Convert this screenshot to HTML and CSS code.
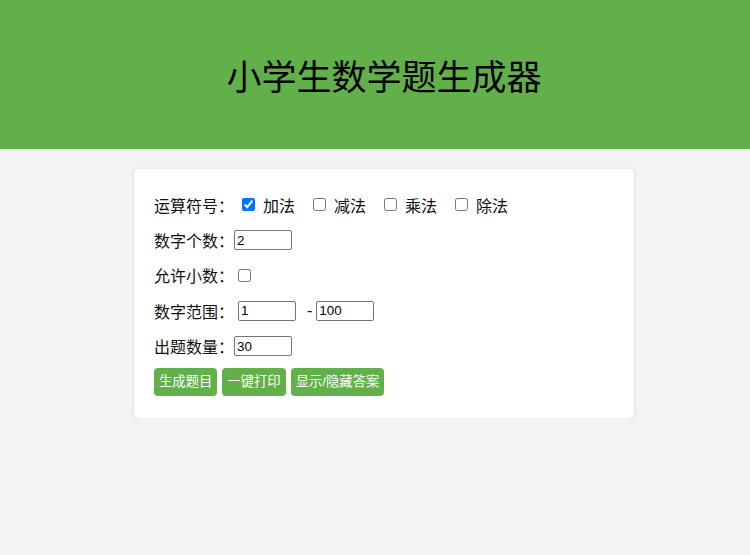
FILE: index.html
```html
<!DOCTYPE html>
<html lang="zh-CN">
<head>
<meta charset="utf-8">
<title>小学生数学题生成器</title>
<link rel="stylesheet" href="styles.css">
</head>
<body>
<header class="header">
  <h1 class="title">小学生数学题生成器</h1>
</header>
<main class="card">
  <div class="row">
    <span class="label label-gap">运算符号：</span>
    <label class="opt"><input type="checkbox" checked>加法</label>
    <label class="opt"><input type="checkbox">减法</label>
    <label class="opt"><input type="checkbox">乘法</label>
    <label class="opt"><input type="checkbox">除法</label>
  </div>
  <div class="row">
    <span class="label">数字个数：</span>
    <input class="num" type="text" value="2">
  </div>
  <div class="row">
    <span class="label">允许小数：</span>
    <input class="check" type="checkbox">
  </div>
  <div class="row">
    <span class="label label-gap">数字范围：</span>
    <input class="num" type="text" value="1">
    <span class="dash">-</span>
    <input class="num" type="text" value="100">
  </div>
  <div class="row">
    <span class="label">出题数量：</span>
    <input class="num" type="text" value="30">
  </div>
  <div class="actions">
    <button class="btn">生成题目</button>
    <button class="btn">一键打印</button>
    <button class="btn">显示/隐藏答案</button>
  </div>
</main>
</body>
</html>
```
FILE: styles.css
```css
html, body {
  margin: 0;
  padding: 0;
}
body {
  background: #f3f3f3;
  font-family: "Noto Sans CJK SC", "Noto Sans", sans-serif;
  color: #111;
}
.header {
  background: #62b04a;
  height: 149px;
  display: flex;
  align-items: center;
  justify-content: center;
  padding-left: 18px;
}
.title {
  margin: 0;
  font-size: 35px;
  font-weight: normal;
  color: #000;
  line-height: 1.2;
}
.card {
  display: block;
  width: 460px;
  margin: 20px 0 0 calc(50% - 241px);
  background: #fff;
  border-radius: 5px;
  box-shadow: 0 1px 4px rgba(0, 0, 0, 0.12);
  padding: 18px 20px 22px;
}
.row {
  display: flex;
  align-items: center;
  height: 35.4px;
  font-size: 16px;
}
.label {
  width: 80px;
  flex: none;
}
.label-gap {
  margin-right: 4px;
}
.opt {
  display: flex;
  align-items: center;
  margin-right: 14px;
}
.opt input, .check {
  width: 13px;
  height: 13px;
  margin: 0 8px 0 4px;
}
.num {
  box-sizing: content-box;
  width: 52px;
  height: 16px;
  padding: 1px 2px;
  border: 1px solid #767676;
  border-radius: 2px;
  font: 13.33px "Liberation Sans", Arial, sans-serif;
  color: #000;
  margin: 0;
}
.dash {
  margin: 0 4px 0 11px;
  font-family: "Liberation Sans", Arial, sans-serif;
}
.actions {
  display: flex;
  gap: 5px;
  padding-top: 4px;
}
.btn {
  background: #62b04a;
  color: #fff;
  border: none;
  border-radius: 4px;
  padding: 5px;
  font-family: "Liberation Sans", "Noto Sans CJK SC", sans-serif;
  font-size: 13.33px;
  line-height: 18px;
  cursor: pointer;
}
```
